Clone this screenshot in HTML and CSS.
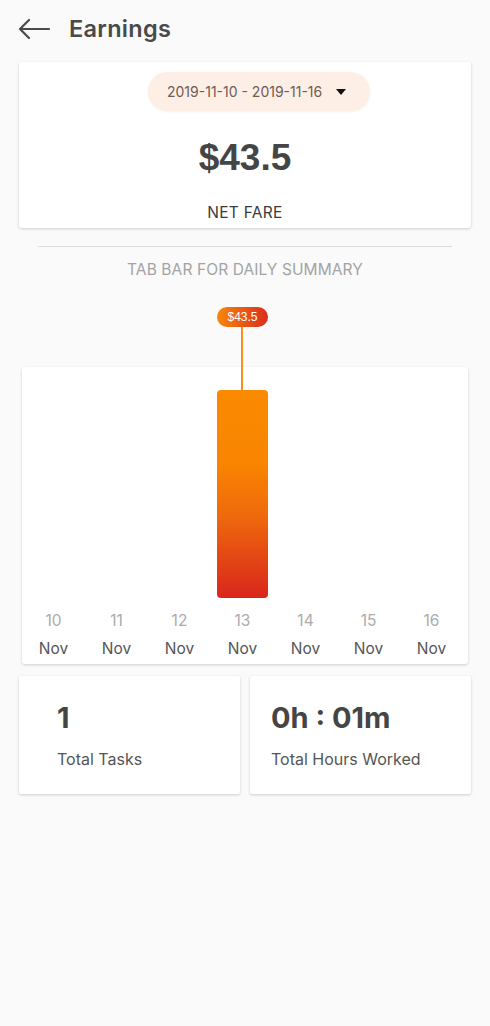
FILE: index.html
```html
<!DOCTYPE html>
<html>
<head>
<meta charset="utf-8">
<link rel="stylesheet" href="styles.css">
</head>
<body>
<header class="appbar">
  <svg class="back" width="32" height="22" viewBox="0 0 32 22">
    <path d="M31 11H2M11 2L2 11l9 9" fill="none" stroke="#4a4a4a" stroke-width="2.2" stroke-linecap="round" stroke-linejoin="round"/>
  </svg>
  <h1 class="title">Earnings</h1>
</header>

<section class="card summary">
  <div class="pill-row">
    <div class="pill">
      <span class="range">2019-11-10 - 2019-11-16</span>
      <span class="caret"></span>
    </div>
  </div>
  <div class="amount">$43.5</div>
  <div class="netfare">NET FARE</div>
</section>

<div class="divider"></div>
<div class="tabbar">TAB BAR FOR DAILY SUMMARY</div>

<section class="card chart">
  <div class="plot">
    <div class="col"></div>
    <div class="col"></div>
    <div class="col"></div>
    <div class="col">
      <div class="bar" style="height:208px">
        <div class="stem"></div>
        <div class="tip">$43.5</div>
      </div>
    </div>
    <div class="col"></div>
    <div class="col"></div>
    <div class="col"></div>
  </div>
  <div class="labels">
    <div class="lab"><span class="day">10</span><span class="mon">Nov</span></div>
    <div class="lab"><span class="day">11</span><span class="mon">Nov</span></div>
    <div class="lab"><span class="day">12</span><span class="mon">Nov</span></div>
    <div class="lab"><span class="day">13</span><span class="mon">Nov</span></div>
    <div class="lab"><span class="day">14</span><span class="mon">Nov</span></div>
    <div class="lab"><span class="day">15</span><span class="mon">Nov</span></div>
    <div class="lab"><span class="day">16</span><span class="mon">Nov</span></div>
  </div>
</section>

<section class="stats">
  <div class="card stat stat-left">
    <div class="value">1</div>
    <div class="label">Total Tasks</div>
  </div>
  <div class="card stat stat-right">
    <div class="value">0h : 01m</div>
    <div class="label">Total Hours Worked</div>
  </div>
</section>
</body>
</html>
```

FILE: styles.css
```css
* { box-sizing: border-box; }
html, body { margin: 0; padding: 0; }
body {
  background: #fafafa;
  font-family: Inter, "Noto Sans", "Liberation Sans", sans-serif;
  color: #4a4a4a;
  width: 490px;
  min-height: 1026px;
}
.appbar {
  height: 56px;
  display: flex;
  align-items: center;
  padding-left: 18px;
  gap: 19px;
}
.back { display: block; margin-top: 2px; }
.title {
  margin: 0;
  font-size: 23.5px;
  font-weight: 600;
  color: #4a4a4a;
  letter-spacing: 0.3px;
}
.card {
  background: #fff;
  box-shadow: 0 1px 3px rgba(0,0,0,0.18);
  border-radius: 2px;
}
.summary {
  margin: 6px 19px 0;
  height: 166px;
  padding-top: 10px;
  border-radius: 0 0 3px 3px;
  display: flex;
  flex-direction: column;
  align-items: center;
}
.pill-row { display: flex; justify-content: center; width: 100%; padding-left: 28px; }
.pill {
  width: 222px;
  height: 39px;
  border-radius: 20px;
  background: #fdefe5;
  display: flex;
  align-items: center;
  padding-left: 19px;
  gap: 14px;
  box-shadow: 0 1px 2px rgba(240,200,170,0.25);
}
.range { font-size: 14px; color: #6e5c55; letter-spacing: 0; }
.caret {
  width: 0; height: 0;
  border-left: 5px solid transparent;
  border-right: 5px solid transparent;
  border-top: 6px solid #111;
}
.amount {
  margin-top: 26px;
  font-family: "Liberation Sans", Arial, sans-serif;
  font-weight: 700;
  font-size: 37px;
  line-height: 42px;
  color: #454545;
}
.netfare {
  margin-top: 24px;
  font-size: 15.5px;
  color: #3a3a3a;
  letter-spacing: 0.3px;
}
.divider {
  margin: 18px 38px 0;
  height: 1px;
  background: #dcdcdc;
}
.tabbar {
  margin-top: 12px;
  text-align: center;
  font-size: 15.5px;
  line-height: 22px;
  color: #a3a3a3;
  letter-spacing: 0.1px;
}
.chart {
  margin: 86px 22px 0;
  height: 297px;
  border-radius: 3px;
}
.plot {
  height: 231px;
  display: grid;
  grid-template-columns: repeat(7, 63px);
  align-items: end;
}
.col { height: 100%; display: flex; align-items: flex-end; justify-content: center; }
.bar {
  position: relative;
  width: 51px;
  border-radius: 4px;
  background: linear-gradient(to bottom, #fb8a00 0%, #f98500 35%, #ef6a0c 60%, #d9261c 100%);
}
.stem {
  position: absolute;
  left: 24px;
  bottom: 100%;
  width: 2px;
  height: 63px;
  background: #f5901c;
}
.tip {
  position: absolute;
  left: 0;
  bottom: calc(100% + 63px);
  width: 51px;
  height: 20px;
  border-radius: 10px;
  background: linear-gradient(to right, #f7870a, #db2d1f);
  color: #fff;
  font-family: "Liberation Sans", Arial, sans-serif;
  font-size: 12px;
  line-height: 20px;
  text-align: center;
}
.labels {
  display: grid;
  grid-template-columns: repeat(7, 63px);
}
.lab { display: flex; flex-direction: column; align-items: center; }
.day { margin-top: 12px; line-height: 22px; font-size: 15.5px; color: #ababab; }
.mon { margin-top: 6px; line-height: 22px; font-size: 15.5px; color: #555; }
.stats {
  margin: 12px 19px 0;
  display: flex;
  gap: 10px;
}
.stat {
  flex: none;
  width: 221px;
  height: 118px;
  padding-top: 24px;
}
.stat-left { padding-left: 38px; }
.stat-right { padding-left: 21px; }
.value {
  font-size: 29px;
  font-weight: 700;
  line-height: 36px;
  color: #454545;
}
.label {
  margin-top: 11px;
  font-size: 16px;
  line-height: 24px;
  color: #555;
}
```
